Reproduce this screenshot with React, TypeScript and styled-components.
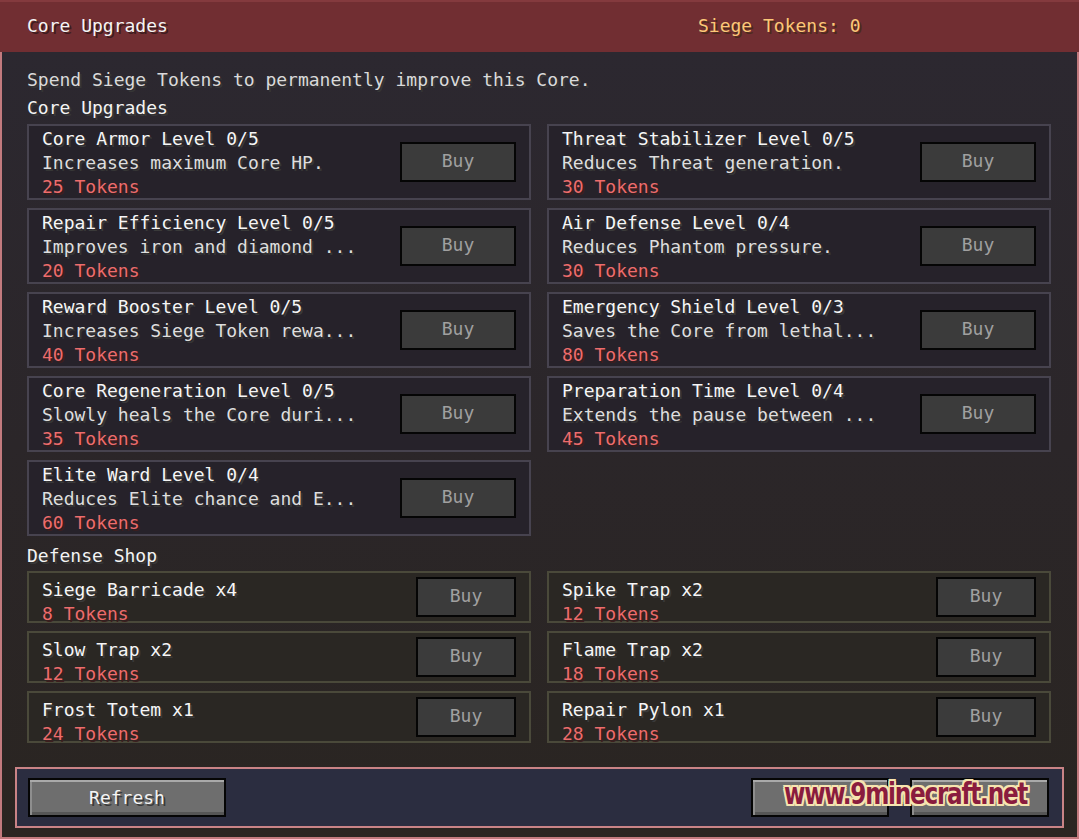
import React from "react";
import styled, {createGlobalStyle} from "styled-components";

type Upgrade = {
    name: string
    level: string
    desc: string
    cost: number
}

type ShopItem = {
    name: string
    cost: number
}

const upgrades: Upgrade[] = [
    {name: "Core Armor", level: "0/5", desc: "Increases maximum Core HP.", cost: 25},
    {name: "Threat Stabilizer", level: "0/5", desc: "Reduces Threat generation.", cost: 30},
    {name: "Repair Efficiency", level: "0/5", desc: "Improves iron and diamond ...", cost: 20},
    {name: "Air Defense", level: "0/4", desc: "Reduces Phantom pressure.", cost: 30},
    {name: "Reward Booster", level: "0/5", desc: "Increases Siege Token rewa...", cost: 40},
    {name: "Emergency Shield", level: "0/3", desc: "Saves the Core from lethal...", cost: 80},
    {name: "Core Regeneration", level: "0/5", desc: "Slowly heals the Core duri...", cost: 35},
    {name: "Preparation Time", level: "0/4", desc: "Extends the pause between ...", cost: 45},
    {name: "Elite Ward", level: "0/4", desc: "Reduces Elite chance and E...", cost: 60},
]

const shopItems: ShopItem[] = [
    {name: "Siege Barricade x4", cost: 8},
    {name: "Spike Trap x2", cost: 12},
    {name: "Slow Trap x2", cost: 12},
    {name: "Flame Trap x2", cost: 18},
    {name: "Frost Totem x1", cost: 24},
    {name: "Repair Pylon x1", cost: 28},
]

const GlobalStyle = createGlobalStyle`
    html, body {
        margin: 0;
        padding: 0;
        background: #2a2626;
    }
    * {
        box-sizing: border-box;
    }
`

export default function App() {
    return (
        <Screen>
            <GlobalStyle/>
            <Header>
                <HeaderTitle>Core Upgrades</HeaderTitle>
                <TokenCount>Siege Tokens: 0</TokenCount>
            </Header>
            <Body>
                <Intro>Spend Siege Tokens to permanently improve this Core.</Intro>
                <SectionLabel>Core Upgrades</SectionLabel>
                <Grid gap={8}>
                    {upgrades.map(u => (
                        <UpgradeCard key={u.name}>
                            <Info>
                                <Title>{u.name} Level {u.level}</Title>
                                <Desc>{u.desc}</Desc>
                                <Cost>{u.cost} Tokens</Cost>
                            </Info>
                            <BuyButton wide>Buy</BuyButton>
                        </UpgradeCard>
                    ))}
                </Grid>
                <SectionLabel second>Defense Shop</SectionLabel>
                <Grid gap={8}>
                    {shopItems.map(s => (
                        <ShopCard key={s.name}>
                            <Info>
                                <Title>{s.name}</Title>
                                <Cost>{s.cost} Tokens</Cost>
                            </Info>
                            <BuyButton>Buy</BuyButton>
                        </ShopCard>
                    ))}
                </Grid>
                <Footer>
                    <MCButton width={198}>Refresh</MCButton>
                    <FooterRight>
                        {/* labels of these two are hidden under the watermark */}
                        <MCButton width={138}/>
                        <MCButton width={139}/>
                        <Watermark>www.9minecraft.net</Watermark>
                    </FooterRight>
                </Footer>
            </Body>
        </Screen>
    )
}

const font = `"DejaVu Sans Mono", "Liberation Mono", monospace`

const Screen = styled.div`
    width: 1079px;
    height: 839px;
    display: flex;
    flex-direction: column;
    font-family: ${font};
    font-size: 18px;
    line-height: 24px;
    overflow: hidden;
`

const Header = styled.div`
    height: 52px;
    flex-shrink: 0;
    display: flex;
    align-items: center;
    background: #712e32;
    border-top: 2px solid #843a3e;
    padding: 0 27px 2px;
`

const HeaderTitle = styled.div`
    color: #f4f4f4;
    text-shadow: 2px 2px 0 #3c1c1e;
    width: 671px;
`

const TokenCount = styled.div`
    color: #fcc878;
    text-shadow: 2px 2px 0 #4a2a1c;
`

const Body = styled.div`
    flex: 1;
    display: flex;
    flex-direction: column;
    padding: 16px 25px 0 25px;
    border: 2px solid #c27a7e;
    border-top: none;
    background: linear-gradient(180deg, #2c2830 0%, #2b2629 50%, #2a2521 100%);
`

const Intro = styled.div`
    color: #dadada;
    text-shadow: 2px 2px 0 #363636;
`

const SectionLabel = styled.div<{ second?: boolean }>`
    color: #f4f4f4;
    text-shadow: 2px 2px 0 #383838;
    margin: ${p => p.second ? "8px 0 3px" : "4px 0 4px"};
`

const Grid = styled.div<{ gap: number }>`
    display: grid;
    grid-template-columns: 504px 504px;
    column-gap: 16px;
    row-gap: ${p => p.gap}px;
`

const UpgradeCard = styled.div`
    height: 76px;
    display: flex;
    align-items: center;
    justify-content: space-between;
    padding: 0 13px 0 13px;
    background: #26222a;
    border: 2px solid #47434f;
`

const ShopCard = styled.div`
    height: 52px;
    display: flex;
    align-items: center;
    justify-content: space-between;
    padding: 0 13px;
    background: #2a2723;
    border: 2px solid #4a493a;
`

const Info = styled.div`
    display: flex;
    flex-direction: column;
    align-self: flex-start;
    padding-top: 1px;
    ${ShopCard} & {
        padding-top: 5px;
    }
`

const Title = styled.div`
    color: #f6f6f6;
    text-shadow: 2px 2px 0 #3a3a3a;
    white-space: nowrap;
`

const Desc = styled.div`
    color: #dedede;
    text-shadow: 2px 2px 0 #363636;
    white-space: nowrap;
`

const Cost = styled.div`
    color: #ee6c6c;
    text-shadow: 2px 2px 0 #3c1e1e;
    white-space: nowrap;
`

const BuyButton = styled.div<{ wide?: boolean }>`
    width: ${p => p.wide ? 116 : 100}px;
    height: 40px;
    flex-shrink: 0;
    display: flex;
    align-items: center;
    justify-content: center;
    background: #3b3b3b;
    border: 2px solid #050505;
    color: #a0a0a0;
    padding-bottom: 2px;
`

const Footer = styled.div`
    margin: 24px -12px 0;
    height: 61px;
    display: flex;
    align-items: center;
    justify-content: space-between;
    padding: 0 13px 0 11px;
    background: #2b2d40;
    border: 2px solid #c98386;
`

const FooterRight = styled.div`
    position: relative;
    display: flex;
    gap: 21px;
`

const MCButton = styled.div<{ width: number }>`
    width: ${p => p.width}px;
    height: 39px;
    display: flex;
    align-items: center;
    justify-content: center;
    background: #6e6e6e;
    border: 2px solid #050505;
    box-shadow: inset 0 2px 0 #a9a9a9, inset 2px 0 0 #8e8e8e, inset 0 -3px 0 #565656;
    color: #f4f4f4;
    text-shadow: 2px 2px 0 #3a3a3a;
`

const Watermark = styled.div`
    position: absolute;
    left: 33px;
    top: -3px;
    font-family: "DejaVu Sans Condensed", "DejaVu Sans", sans-serif;
    font-weight: bold;
    font-size: 31px;
    line-height: 36px;
    letter-spacing: -1.5px;
    color: #8a1c3e;
    white-space: nowrap;
    transform: scaleX(0.83);
    transform-origin: left center;
    text-shadow: -2px 0 0 #f6e4b0, 2px 0 0 #f6e4b0, 0 -2px 0 #f6e4b0, 0 2px 0 #f6e4b0,
    -2px -2px 0 #f6e4b0, 2px 2px 0 #f6e4b0, -2px 2px 0 #f6e4b0, 2px -2px 0 #f6e4b0;
`
